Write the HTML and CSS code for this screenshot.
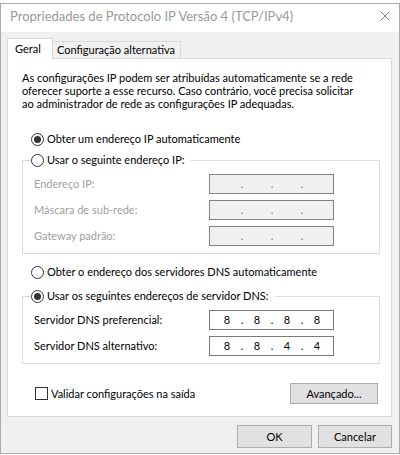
FILE: index.html
```html
<!DOCTYPE html>
<html lang="pt">
<head>
<meta charset="utf-8">
<title>Propriedades de Protocolo IP Versão 4 (TCP/IPv4)</title>
<link rel="stylesheet" href="styles.css">
</head>
<body>
<div class="window">
  <div class="titlebar">
    <span class="title">Propriedades de Protocolo IP Versão 4 (TCP/IPv4)</span>
    <svg class="close" viewBox="0 0 10 10" width="10" height="10"><path d="M0.5 0.5L9.5 9.5M9.5 0.5L0.5 9.5" stroke="#8c8c8c" stroke-width="1" fill="none"/></svg>
  </div>
  <div class="content">
    <div class="tabs">
      <div class="tab active">Geral</div>
      <div class="tab">Configuração alternativa</div>
    </div>
    <div class="panel">
      <p class="intro">As configurações IP podem ser atribuídas automaticamente se a rede<br>oferecer suporte a esse recurso. Caso contrário, você precisa solicitar<br>ao administrador de rede as configurações IP adequadas.</p>

      <div class="radio-row first"><span class="radio checked"></span><span>Obter um endereço IP automaticamente</span></div>

      <fieldset class="group group-ip">
        <legend><span class="radio"></span><span>Usar o seguinte endereço IP:</span></legend>
        <div class="field-row disabled"><span class="label">Endereço IP:</span><span class="ipbox off"><span class="seg"></span><span class="dot">.</span><span class="seg"></span><span class="dot">.</span><span class="seg"></span><span class="dot">.</span><span class="seg"></span></span></div>
        <div class="field-row disabled"><span class="label">Máscara de sub-rede:</span><span class="ipbox off"><span class="seg"></span><span class="dot">.</span><span class="seg"></span><span class="dot">.</span><span class="seg"></span><span class="dot">.</span><span class="seg"></span></span></div>
        <div class="field-row disabled"><span class="label">Gateway padrão:</span><span class="ipbox off"><span class="seg"></span><span class="dot">.</span><span class="seg"></span><span class="dot">.</span><span class="seg"></span><span class="dot">.</span><span class="seg"></span></span></div>
      </fieldset>

      <div class="radio-row second"><span class="radio"></span><span>Obter o endereço dos servidores DNS automaticamente</span></div>

      <fieldset class="group group-dns">
        <legend><span class="radio checked"></span><span>Usar os seguintes endereços de servidor DNS:</span></legend>
        <div class="field-row"><span class="label">Servidor DNS preferencial:</span><span class="ipbox"><span class="seg">8</span><span class="dot">.</span><span class="seg">8</span><span class="dot">.</span><span class="seg">8</span><span class="dot">.</span><span class="seg">8</span></span></div>
        <div class="field-row"><span class="label">Servidor DNS alternativo:</span><span class="ipbox"><span class="seg">8</span><span class="dot">.</span><span class="seg">8</span><span class="dot">.</span><span class="seg">4</span><span class="dot">.</span><span class="seg">4</span></span></div>
      </fieldset>

      <div class="bottom-row">
        <span class="checkbox"></span><span class="check-label">Validar configurações na saída</span>
        <button class="btn advanced" type="button">Avançado...</button>
      </div>
    </div>
    <div class="buttons">
      <button class="btn ok" type="button">OK</button>
      <button class="btn cancel" type="button">Cancelar</button>
    </div>
  </div>
</div>
</body>
</html>
```
FILE: styles.css
```css
* { box-sizing: border-box; }
html, body { margin: 0; padding: 0; background: #ffffff; }
body {
  font-family: Lato, "Noto Sans", sans-serif;
  font-size: 11px;
  color: #000;
  width: 400px;
  height: 455px;
  overflow: hidden;
}
.window {
  margin-top: 3px;
  width: 400px;
  height: 451px;
  border: 1px solid #ababab;
  background: #f0f0f0;
  display: flex;
  flex-direction: column;
}
.titlebar {
  height: 28px;
  flex: 0 0 28px;
  background: #fff;
  display: flex;
  align-items: flex-start;
}
.title {
  font-size: 13px;
  line-height: 18px;
  color: #999;
  margin: 3px 0 0 9px;
  white-space: nowrap;
}
.close {
  margin: 7px 9px 0 auto;
  display: block;
}
.content {
  flex: 1;
  padding: 6px 7px 0 6px;
  display: flex;
  flex-direction: column;
}
.tabs {
  display: flex;
  align-items: flex-end;
  height: 21px;
  border-bottom: 1px solid #d9d9d9;
}
.tab {
  height: 17px;
  line-height: 16px;
  border: 1px solid #d9d9d9;
  border-bottom: none;
  border-left: none;
  background: #f0f0f0;
  width: 128px;
  padding-left: 4px;
  white-space: nowrap;
}
.tab.active {
  height: 21px;
  margin-bottom: -1px;
  line-height: 20px;
  width: 46px;
  border-left: 1px solid #d9d9d9;
  background: #fff;
  padding-left: 7px;
}
.panel {
  height: 358px;
  background: #fff;
  border: 1px solid #d9d9d9;
  border-top: none;
  padding: 12px 0 0 14px;
  display: flex;
  flex-direction: column;
}
.intro {
  margin: 0;
  line-height: 13px;
  white-space: nowrap;
}
.radio-row {
  display: flex;
  align-items: center;
  height: 16px;
  line-height: 16px;
  white-space: nowrap;
}
.radio-row.first { margin-top: 21px; }
.radio-row.second { margin-top: 10px; }
.radio {
  width: 13px;
  height: 13px;
  border: 1px solid #333;
  border-radius: 50%;
  background: #fff;
  margin: 0 3px 0 9px;
  flex: 0 0 13px;
  display: flex;
  align-items: center;
  justify-content: center;
}
.radio.checked::after {
  content: "";
  width: 7px;
  height: 7px;
  border-radius: 50%;
  background: #333;
}
.group {
  margin: 5px 11px 0 0;
  padding: 0 0 7px 11px;
  border: 1px solid #dcdcdc;
  min-width: 0;
}
.group-dns { margin-top: 8px; }
.group legend {
  display: flex;
  align-items: center;
  height: 16px;
  line-height: 16px;
  padding: 0 6px 0 0;
  margin-left: -3px;
  white-space: nowrap;
}
.group legend .radio { margin-left: 0; }
.field-row {
  display: flex;
  align-items: center;
  height: 20px;
  margin-top: 6px;
  line-height: 20px;
  white-space: nowrap;
}
.field-row .label { flex: 0 0 175px; }
.field-row.disabled .label { color: #a0a0a0; }
.ipbox {
  width: 125px;
  height: 20px;
  border: 1px solid #7a7a7a;
  background: #fff;
  display: flex;
  padding-left: 5px;
  line-height: 18px;
}
.ipbox.off { background: #f0f0f0; border-color: #828282; }
.seg { width: 24px; text-align: center; }
.dot { width: 6px; text-align: center; }
.ipbox.off .dot { color: #7a7a7a; }
.bottom-row {
  display: flex;
  align-items: center;
  height: 21px;
  margin-top: 19px;
  white-space: nowrap;
}
.checkbox {
  width: 13px;
  height: 13px;
  border: 1px solid #333;
  background: #fff;
  margin: 0 3px 0 13px;
}
.btn {
  font-family: inherit;
  font-size: 11px;
  color: #000;
  background: #e1e1e1;
  border: 1px solid #adadad;
  padding: 0;
  margin: 0;
  border-radius: 0;
}
.advanced {
  margin-left: auto;
  margin-right: 13px;
  width: 88px;
  height: 21px;
}
.buttons {
  display: flex;
  justify-content: flex-end;
  gap: 6px;
  margin-top: 8px;
}
.ok { width: 75px; height: 23px; }
.cancel { width: 74px; height: 23px; }
```
